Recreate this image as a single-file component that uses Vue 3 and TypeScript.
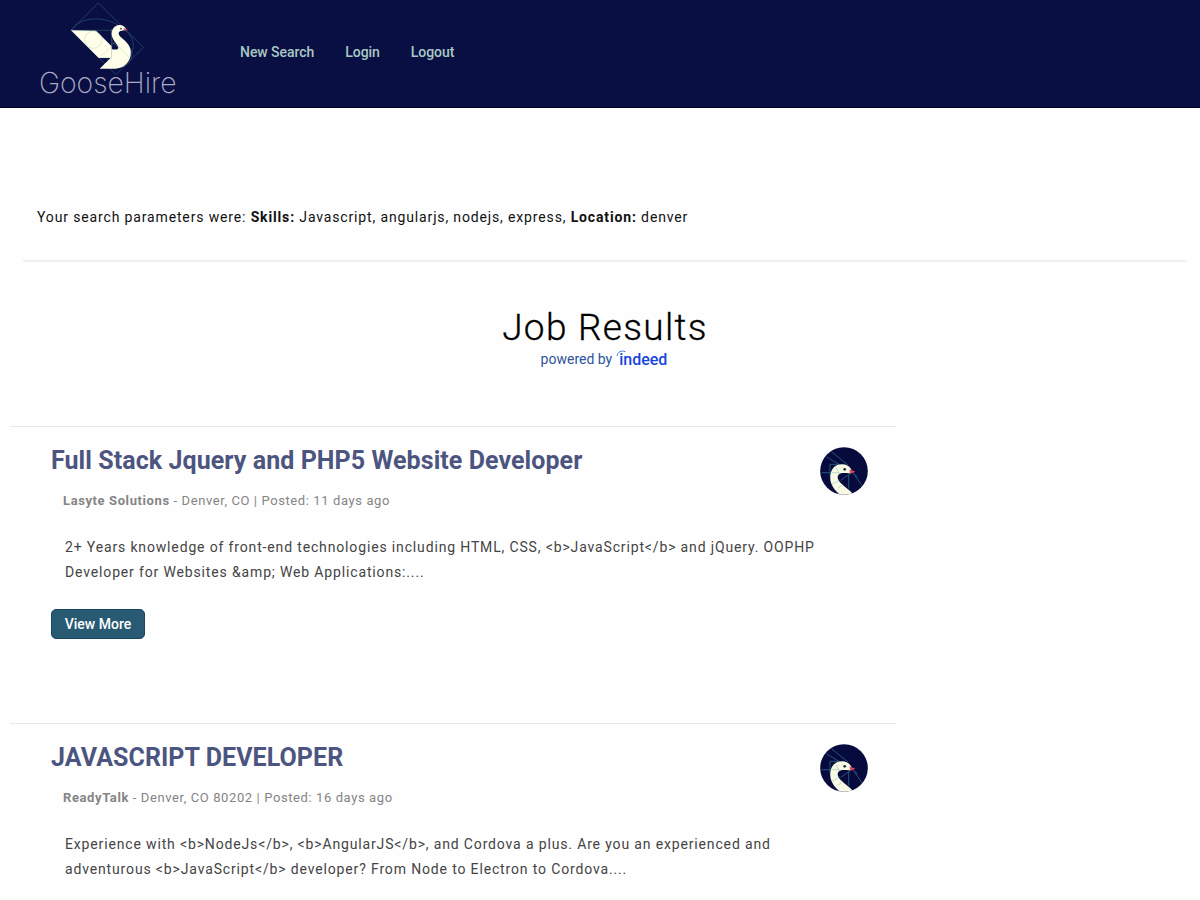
<script setup lang="ts">
interface Job {
  title: string
  company: string
  details: string
  summary: string[]
}

const navLinks: string[] = ['New Search', 'Login', 'Logout']

const jobs: Job[] = [
  {
    title: 'Full Stack Jquery and PHP5 Website Developer',
    company: 'Lasyte Solutions',
    details: 'Denver, CO | Posted: 11 days ago',
    summary: [
      '2+ Years knowledge of front-end technologies including HTML, CSS, <b>JavaScript</b> and jQuery. OOPHP',
      'Developer for Websites &amp; Web Applications:....',
    ],
  },
  {
    title: 'JAVASCRIPT DEVELOPER',
    company: 'ReadyTalk',
    details: 'Denver, CO 80202 | Posted: 16 days ago',
    summary: [
      'Experience with <b>NodeJs</b>, <b>AngularJS</b>, and Cordova a plus. Are you an experienced and',
      'adventurous <b>JavaScript</b> developer? From Node to Electron to Cordova....',
    ],
  },
]
</script>

<template>
  <div class="page">
    <header class="header">
      <svg class="logo" viewBox="0 0 480 324" role="img" aria-label="GooseHire">
        <g class="guides">
          <path d="M205 9 L340 142 L258 224 L123 91 Z" />
          <path d="M123 91 C150 48 230 44 278 86" />
          <path d="M123 91 H290" />
          <circle cx="268" cy="164" r="38" />
          <path d="M285 90 C320 118 314 153 293 180" />
        </g>
        <path class="wing" d="M123 91 L198 92 L245 139 L245 174 L206 174 Z" />
        <path
          class="wing"
          d="M289 88 C281 72 259 70 249 86 C241 99 245 113 257 128 C271 147 265 152 244 147 L244 172 L209 206 L256 206 C279 206 299 189 302 166 C306 140 291 128 273 112 C263 102 264 93 275 92 Z"
        />
        <path class="beak" d="M281 84 L294 90 L283 93 Z" />
        <circle cx="273" cy="86" r="2.5" fill="#222b50" />
        <g class="guides inner">
          <circle cx="190" cy="119" r="26" />
          <path d="M245 87 V175 M216 167 L245 138 M204 173 H244 M246 126 L276 148 L299 174" />
        </g>
        <text class="brand" x="27" y="279" textLength="413" lengthAdjust="spacingAndGlyphs">GooseHire</text>
      </svg>
      <nav class="nav">
        <a v-for="link in navLinks" :key="link">{{ link }}</a>
      </nav>
    </header>

    <section class="params">
      Your search parameters were: <b>Skills:</b> Javascript, angularjs, nodejs, express, <b>Location:</b> denver
    </section>

    <section class="heading">
      <h1>Job Results</h1>
      <div class="powered">
        <span>powered by</span>
        <span class="indeed">
          <svg viewBox="0 0 12 7"><path d="M1 6 C1.5 2 5 0 9.5 1.8" /></svg>
          indeed
        </span>
      </div>
    </section>

    <main class="results">
      <article v-for="job in jobs" :key="job.title" class="job">
        <div class="content">
          <h2>{{ job.title }}</h2>
          <p class="meta"><b>{{ job.company }}</b> - {{ job.details }}</p>
          <p class="summary"><span v-for="line in job.summary" :key="line">{{ line }}</span></p>
          <button type="button">View More</button>
        </div>
        <svg class="avatar" viewBox="0 0 144 144">
          <defs>
            <clipPath id="disc"><circle cx="72" cy="72" r="71.5" /></clipPath>
          </defs>
          <g clip-path="url(#disc)">
            <rect width="144" height="144" fill="#060a3d" />
            <path class="rays" d="M20 30 L60 54 M34 14 L84 54 M5 77 H34 M30 52 V88 M30 52 H60 M62 100 L92 79 M86 82 V125 M98 76 L126 116 M98 76 L112 90" />
            <path
              class="swan"
              d="M94 78 C84 81 68 75 58 81 C50 87 52 98 62 108 C74 120 86 128 99 140 L92 150 L70 150 C44 132 28 112 31 86 C34 62 48 51 68 52 C82 53 90 60 94 68 Z"
            />
            <path class="trace" d="M35 77 H58 M36 112 L60 98 M46 58 L58 80 M54 124 L68 112" />
            <circle cx="74" cy="67" r="4" fill="#202c42" />
            <path class="beak" d="M89 67 L106 74 L90 81 Z" />
          </g>
        </svg>
      </article>
    </main>
  </div>
</template>

<style>
body {
  background: #fefefe;
}
</style>

<style scoped>
.page {
  width: 1200px;
  height: 900px;
  overflow: hidden;
  font-family: Roboto, sans-serif;
  color: #111;
}

.header {
  box-sizing: border-box;
  display: flex;
  height: 108px;
  padding-left: 30px;
  background: #090f42;
  border-bottom: 1px solid #02041c;
}

.logo {
  width: 160px;
  height: 108px;
}

.wing {
  fill: #ffffe9;
}

.guides {
  fill: none;
  stroke: #2f6681;
  stroke-width: 2.4;
  opacity: 0.7;
}

.inner {
  stroke: #8fc0ae;
  opacity: 0.4;
}

.beak {
  fill: #d9485b;
}

.brand {
  font-family: Inter, sans-serif;
  font-size: 87px;
  font-weight: 200;
  fill: #a9abc6;
}

.nav {
  display: flex;
  gap: 31px;
  padding: 43px 0 0 50px;
  font-size: 14px;
  font-weight: 500;
  line-height: 18px;
  letter-spacing: -0.05px;
  color: #a9c8c5;
}

.params {
  box-sizing: border-box;
  height: 154px;
  margin: 0 13px 0 23px;
  padding: 98px 0 0 14px;
  border-bottom: 2px solid #f0f0f0;
  font-size: 14px;
  line-height: 22px;
  letter-spacing: 0.855px;
}

.heading {
  height: 164px;
  box-sizing: border-box;
  padding: 44px 0 0 10px;
  text-align: center;
}

h1 {
  margin: 0 0 1px;
  font-size: 37px;
  font-weight: 300;
  line-height: 44px;
  letter-spacing: 1.3px;
  color: #000;
  -webkit-text-stroke: 0.3px #000;
}

.powered {
  display: flex;
  justify-content: center;
  gap: 7px;
  padding-right: 2px;
  font-size: 14px;
  line-height: 17px;
  color: #2d559b;
}

.indeed {
  position: relative;
  font-size: 16px;
  font-weight: 500;
  color: #1745df;
}

.indeed svg {
  position: absolute;
  left: -3px;
  top: -1px;
  width: 12px;
  height: 7px;
  fill: none;
  stroke: #4a78dc;
}

.results {
  width: 886px;
  margin-left: 10px;
}

.job {
  box-sizing: border-box;
  display: flex;
  justify-content: space-between;
  height: 297px;
  padding: 17px 28px 0 41px;
  border-top: 1px solid #e8e8e8;
}

h2 {
  margin: 0;
  font-size: 25px;
  font-weight: 700;
  line-height: 34px;
  letter-spacing: 0.07px;
  color: #4c5580;
}

.meta {
  margin: 13px 0 0 12px;
  font-size: 13px;
  line-height: 20px;
  letter-spacing: 0.6px;
  color: #858585;
}

.summary {
  margin: 24px 0 0 14px;
  font-size: 14px;
  line-height: 25px;
  letter-spacing: 0.85px;
  color: #444;
}

.summary span {
  display: block;
  white-space: nowrap;
}

button {
  box-sizing: border-box;
  display: block;
  width: 94px;
  height: 30px;
  margin-top: 24px;
  padding: 0;
  border: 1px solid #174760;
  border-radius: 5px;
  background: #285a73;
  font: 500 14px/18px Roboto, sans-serif;
  color: #fff;
}

.avatar {
  flex: none;
  width: 48px;
  height: 48px;
  margin-top: 3px;
}

.swan {
  fill: #f9fae5;
}

.rays {
  fill: none;
  stroke: #285578;
  stroke-width: 3;
}

.trace {
  fill: none;
  stroke: #6baaa8;
  stroke-width: 3;
  opacity: 0.4;
}
</style>
